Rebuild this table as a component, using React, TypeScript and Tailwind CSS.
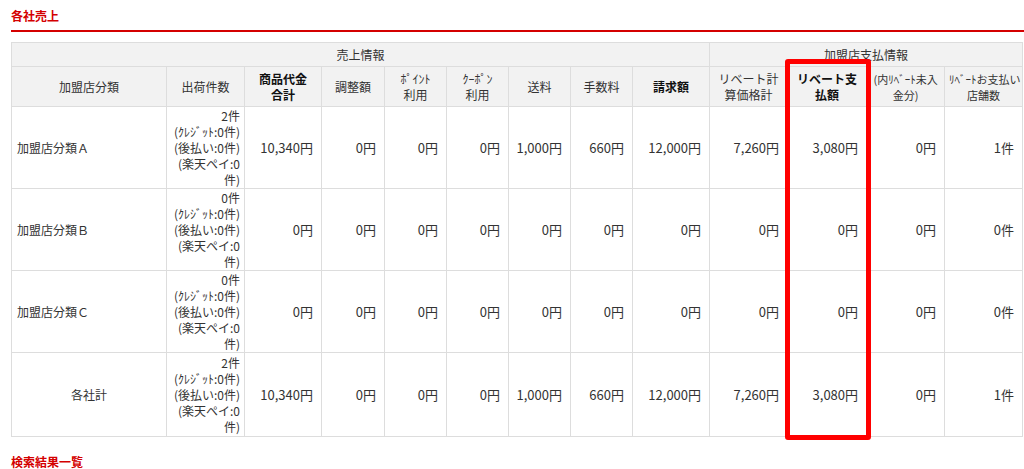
import React from "react";

type Row = {
  label: string;
  center?: boolean;
  count: string;
  values: string[];
};

const rows: Row[] = [
  {
    label: "加盟店分類Ａ",
    count: "2件",
    values: ["10,340円", "0円", "0円", "0円", "1,000円", "660円", "12,000円", "7,260円", "3,080円", "0円", "1件"],
  },
  {
    label: "加盟店分類Ｂ",
    count: "0件",
    values: ["0円", "0円", "0円", "0円", "0円", "0円", "0円", "0円", "0円", "0円", "0件"],
  },
  {
    label: "加盟店分類Ｃ",
    count: "0件",
    values: ["0円", "0円", "0円", "0円", "0円", "0円", "0円", "0円", "0円", "0円", "0件"],
  },
  {
    label: "各社計",
    center: true,
    count: "2件",
    values: ["10,340円", "0円", "0円", "0円", "1,000円", "660円", "12,000円", "7,260円", "3,080円", "0円", "1件"],
  },
];

const widths = [155, 78, 77, 63, 62, 62, 62, 62, 77, 78, 79, 78, 78];

const th = "border border-[#dddddd] bg-[#f2f2f2] text-center align-middle leading-[16px] px-1";
const td = "border border-[#dddddd] align-middle text-right pr-[8px] leading-[16px]";

function Head({ lines, bold }: { lines: string[]; bold?: boolean }) {
  return (
    <th className={`${th} ${bold ? "font-bold text-[#111]" : "font-normal"}`}>
      {lines.map((l, i) => (
        <div key={i} className="whitespace-nowrap">
          {l}
        </div>
      ))}
    </th>
  );
}

export default function App() {
  return (
    <div
      className="bg-white text-[#333] text-[12px] px-[11px] w-[1024px] h-[469px] overflow-hidden"
      style={{ fontFamily: '"Noto Sans CJK JP", "Noto Sans", sans-serif' }}
    >
      <div className="pt-[7px] pb-[5px] text-[12px] font-bold text-[#d40000] leading-[18px]">各社売上</div>
      <div className="h-[2px] bg-[#d40000] mr-[-11px]" />

      <div className="relative mt-[10px]">
        <table className="table-fixed border-collapse w-[1011px]">
          <colgroup>
            {widths.map((w, i) => (
              <col key={i} style={{ width: w }} />
            ))}
          </colgroup>
          <thead>
            <tr className="h-[24px]">
              <th colSpan={9} className={`${th} font-normal`}>
                売上情報
              </th>
              <th colSpan={4} className={`${th} font-normal`}>
                加盟店支払情報
              </th>
            </tr>
            <tr className="h-[40px]">
              <Head lines={["加盟店分類"]} />
              <Head lines={["出荷件数"]} />
              <Head lines={["商品代金", "合計"]} bold />
              <Head lines={["調整額"]} />
              <Head lines={["ﾎﾟｲﾝﾄ", "利用"]} />
              <Head lines={["ｸｰﾎﾟﾝ", "利用"]} />
              <Head lines={["送料"]} />
              <Head lines={["手数料"]} />
              <Head lines={["請求額"]} bold />
              <Head lines={["リベート計", "算価格計"]} />
              <Head lines={["リベート支", "払額"]} bold />
              <th className={`${th} font-normal text-[11px]`}>
                <div className="whitespace-nowrap">(内ﾘﾍﾞｰﾄ未入</div>
                <div className="whitespace-nowrap">金分)</div>
              </th>
              <th className={`${th} font-normal text-[11px]`}>
                <div className="whitespace-nowrap">ﾘﾍﾞｰﾄお支払い</div>
                <div className="whitespace-nowrap">店舗数</div>
              </th>
            </tr>
          </thead>
          <tbody>
            {rows.map((r) => (
              <tr key={r.label} className={r.center ? "h-[84px]" : "h-[82px]"}>
                <td
                  className={`border border-[#dddddd] align-middle ${
                    r.center ? "text-center" : "text-left pl-[5px]"
                  }`}
                >
                  {r.label}
                </td>
                <td className="border border-[#dddddd] align-middle text-right pr-[4px] leading-[16px] text-[12px]">
                  <div>{r.count}</div>
                  <div className="whitespace-nowrap">(ｸﾚｼﾞｯﾄ:0件)</div>
                  <div className="whitespace-nowrap">(後払い:0件)</div>
                  <div className="whitespace-nowrap">(楽天ペイ:0</div>
                  <div className="whitespace-nowrap">件)</div>
                </td>
                {r.values.map((v, i) => (
                  <td key={i} className={`${td} text-[13px]`}>
                    {v}
                  </td>
                ))}
              </tr>
            ))}
          </tbody>
        </table>
        <div className="absolute left-[774px] top-[17px] w-[86px] h-[381px] border-[5px] border-[#ff0000] rounded-[3px] pointer-events-none" />
      </div>

      <div className="mt-[16px] text-[12px] font-bold text-[#d40000] leading-[18px]">検索結果一覧</div>
    </div>
  );
}
